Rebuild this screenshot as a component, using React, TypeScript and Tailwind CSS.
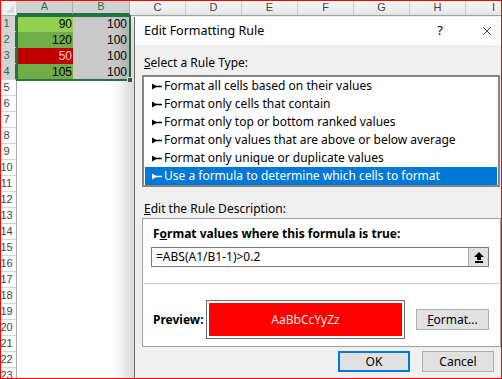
import { X } from 'lucide-react';

const dlgFont = { fontFamily: '"Noto Sans", "Open Sans", sans-serif' };

const columns = ['C', 'D', 'E', 'F', 'G', 'H', 'I'];

const dataRows = [
  { a: '90', aBg: 'bg-[#92d050]', aText: 'text-black' },
  { a: '120', aBg: 'bg-[#70ad47]', aText: 'text-black' },
  { a: '50', aBg: 'bg-[#c00000]', aText: 'text-[#ffc7ce]' },
  { a: '105', aBg: 'bg-[#70ad47]', aText: 'text-black' },
];

const ruleTypes = [
  'Format all cells based on their values',
  'Format only cells that contain',
  'Format only top or bottom ranked values',
  'Format only values that are above or below average',
  'Format only unique or duplicate values',
  'Use a formula to determine which cells to format',
];

function RuleArrow({ color }: { color: string }) {
  return (
    <svg width="10" height="7" viewBox="0 0 10 7" className="shrink-0">
      <polygon points="0,0.5 5,3.5 0,6.5" fill={color} />
      <rect x="2" y="2.75" width="8" height="1.5" fill={color} />
    </svg>
  );
}

function Sheet() {
  return (
    <div className="relative" style={{ fontFamily: '"Liberation Sans", Arial, sans-serif' }}>
      {/* column headers */}
      <div className="flex h-[16px] bg-[#f3f3f3] border-b border-[#ababab] text-[11px] text-[#444]">
        <div className="w-[17px] shrink-0 relative border-r border-[#d0d0d0]">
          <svg width="8" height="8" className="absolute right-[2px] bottom-[2px]">
            <polygon points="8,0 8,8 0,8" fill="#dadada" />
          </svg>
        </div>
        <div className="w-[56px] shrink-0 flex items-center justify-center bg-[#d2d2d2] text-[#217346] border-r border-[#ababab] border-b-2 border-b-[#217346]">A</div>
        <div className="w-[57px] shrink-0 flex items-center justify-center bg-[#d2d2d2] text-[#217346] border-r border-[#ababab] border-b-2 border-b-[#217346]">B</div>
        {columns.map(c => (
          <div key={c} className="w-[56px] shrink-0 flex items-center justify-center border-r border-[#d0d0d0]">{c}</div>
        ))}
      </div>

      {/* rows */}
      {Array.from({ length: 23 }, (_, i) => {
        const n = i + 1;
        const row = dataRows[i];
        return (
          <div key={n} className="flex h-[16px]">
            <div className={`w-[17px] shrink-0 border-b border-[#d4d4d4] text-[11px] leading-[15px] ${row ? 'bg-[#d2d2d2] text-[#217346] border-r-2 border-r-[#217346]' : 'bg-white text-[#444] border-r border-r-[#ababab]'}`}>
              <div className="w-[13px] text-center">{n}</div>
            </div>
            {row ? (
              <>
                <div className={`w-[56px] shrink-0 ${row.aBg} ${row.aText} text-[12px] leading-[16px] text-right pr-[1px]`}>{row.a}</div>
                <div className="w-[57px] shrink-0 bg-[#c9c9c9] text-black text-[12px] leading-[16px] text-right pr-[3px]">100</div>
              </>
            ) : (
              <div className="w-[113px] shrink-0 bg-white" />
            )}
          </div>
        );
      })}

      {/* selection outline A1:B4 */}
      <div className="absolute left-[16px] top-[15px] w-[115px] h-[66px] border-2 border-[#217346]" />
      <div className="absolute left-[127px] top-[77px] w-[6px] h-[6px] bg-[#217346] border border-white" />
    </div>
  );
}

function Dialog() {
  return (
    <div
      className="absolute left-[133px] top-[16px] w-[380px] h-[380px] bg-[#f0f0f0] border-l border-[#6d6d6d] shadow-[-10px_0_14px_rgba(0,0,0,0.16)] text-[12px] text-black"
      style={dlgFont}
    >
      {/* title bar */}
      <div className="h-[28px] bg-white flex items-center pl-[9px]">
        <span className="text-[12.5px] w-[286px]">Edit Formatting Rule</span>
        <span className="w-[20px] text-center text-[13px]">?</span>
        <div className="w-[30px]" />
        <X size={14} strokeWidth={1.25} className="text-black" />
      </div>

      {/* body */}
      <div className="pl-[7px]">
        <div className="mt-[10px] h-[16px] leading-[16px] pl-[2px]">
          <span className="underline">S</span>elect a Rule Type:
        </div>

        <div className="mt-[4px] w-[358px] h-[112px] bg-white border-2 border-[#858585] pl-[1px]">
          {ruleTypes.map((r, i) => {
            const sel = i === ruleTypes.length - 1;
            return (
              <div
                key={r}
                className={`h-[18px] flex items-center gap-[1px] pl-[7px] whitespace-nowrap ${sel ? 'bg-[#0078d7] text-white w-[352px]' : ''}`}
              >
                <RuleArrow color={sel ? '#ffffff' : '#000000'} />
                <span className="ml-[1px]">{r}</span>
              </div>
            );
          })}
        </div>

        <div className="mt-[14px] h-[16px] leading-[16px] pl-[2px]">
          <span className="underline">E</span>dit the Rule Description:
        </div>

        <div className="mt-[1px] w-[359px] h-[129px] bg-white border border-[#a0a0a0]">
          <div className="mt-[7px] h-[16px] leading-[16px] pl-[10px] font-bold">
            F<span className="underline">o</span>rmat values where this formula is true:
          </div>
          <div className="mt-[5px] ml-[8px] w-[338px] h-[20px] border border-[#7a7a7a] flex items-center">
            <span className="flex-1 pl-[4px] text-[12px]">=ABS(A1/B1-1)&gt;0.2</span>
            <div className="w-[20px] h-[18px] bg-[#e1e1e1] border-l border-[#adadad] flex items-center justify-center">
              <svg width="10" height="11" viewBox="0 0 10 11">
                <polygon points="5,0 10,5 7,5 7,8 3,8 3,5 0,5" fill="#000" />
                <rect x="1" y="9" width="8" height="2" fill="#000" />
              </svg>
            </div>
          </div>
          <div className="mt-[16px] ml-[1px] w-[355px] h-px bg-[#c8c8c8]" />
          <div className="mt-[16px] flex items-center pl-[10px]">
            <span className="font-bold w-[53px]">Preview:</span>
            <div className="w-[199px] h-[39px] border border-[#6d6d6d] p-[2px]">
              <div className="w-full h-full bg-[#ff0000] flex items-center justify-center text-[#ffe0e0]">AaBbCcYyZz</div>
            </div>
            <button className="ml-[11px] w-[73px] h-[21px] bg-[#e1e1e1] border border-[#adadad] flex items-center justify-center">
              <span className="underline">F</span>ormat...
            </button>
          </div>
        </div>

        <div className="mt-[4px] flex gap-[12px] pl-[196px]">
          <button className="w-[72px] h-[21px] bg-[#e1e1e1] border-2 border-[#0078d7] flex items-center justify-center">OK</button>
          <button className="w-[72px] h-[21px] bg-[#e1e1e1] border border-[#adadad] flex items-center justify-center">Cancel</button>
        </div>
      </div>
    </div>
  );
}

export default function App() {
  return (
    <div className="relative w-[502px] h-[379px] overflow-hidden bg-white border border-[#ff0000]">
      <div className="-ml-px -mt-px">
        <Sheet />
      </div>
      <Dialog />
    </div>
  );
}
